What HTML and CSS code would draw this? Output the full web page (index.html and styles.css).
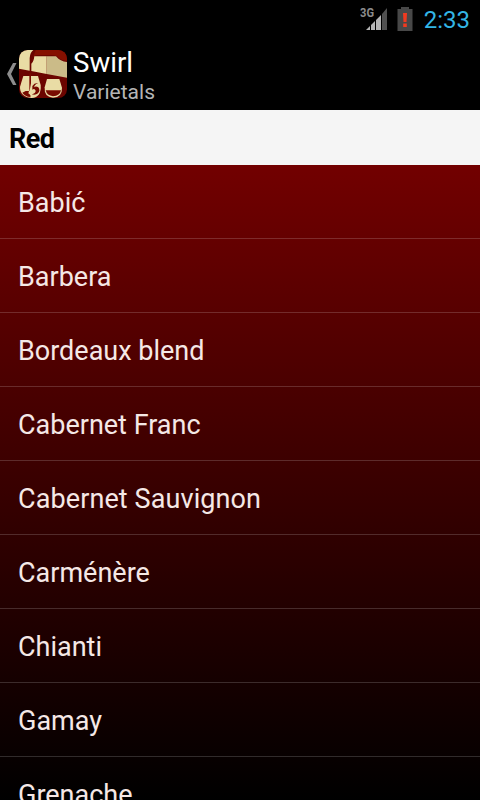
FILE: index.html
```
<!DOCTYPE html>
<html lang="en">
<head>
<meta charset="utf-8">
<title>Swirl</title>
<link rel="stylesheet" href="styles.css">
</head>
<body>
<div class="status">
  <svg class="signal" width="28" height="26" viewBox="0 0 28 26">
    <text class="network" x="0" y="12" textLength="14" lengthAdjust="spacingAndGlyphs">3G</text>
    <path fill="#b5b5b5" d="M6 25L10 21V25ZM11 20L15 16V25H11ZM16 15L21 10V25H16Z"/>
    <path fill="#505050" d="M22 9L27 3V25H22Z"/>
  </svg>
  <svg class="battery" width="16" height="24" viewBox="0 0 16 24">
    <path fill="#484848" d="M4 0H12V2H15.500V24H.500V2H4Z"/>
    <path fill="#f03a20" d="M6 6H10L9.500 15H6.500ZM6.200 16.500H9.800V20H6.200Z"/>
  </svg>
  <span class="clock">2:33</span>
</div>
<header class="bar">
  <svg class="back" width="11" height="22" viewBox="0 0 11 22"><path fill="#8c8c8c" d="M6 0H9.500L4 11L9.500 22H6L0 11Z"/></svg>
  <svg class="logo" width="48" height="48" viewBox="0 0 144 144">
    <defs><clipPath id="round"><rect width="144" height="144" rx="26"/></clipPath></defs>
    <g clip-path="url(#round)">
      <rect width="144" height="144" fill="#6b0500"/>
      <path fill="#e9dca5" d="M0 0H43Q33 8 32 24V62L0 56Z"/>
      <path fill="#851000" d="M50 0H144V32Q126 32 116 20Q112 15 98 15H56Q45 15 42 24Z"/>
      <path fill="#e9dca5" d="M46 19H83V72L37 63V41Q44 36 46 19Z"/>
      <path fill="#cbbb88" d="M83 19H111Q124 35 144 36V83L83 72Z"/>
      <path fill="#e9dca5" d="M13 78H57L65 105Q68 142 38 144Q2 140 3 110Z"/>
      <path fill="#780b00" d="M31 70H36V100L32 122Q26 124 20 123L10 128Q18 140 34 141Q37 136 28 130L31 120Z"/>
      <path fill="#780b00" d="M40 108Q46 98 57 99Q45 104 46 112Q50 107 58 112Q65 122 57 130Q50 136 38 133Q50 130 50 122Q47 114 40 119Z"/>
      <path fill="#e9dca5" d="M84 87H121L129 113Q130 142 102 143Q75 142 77 112Z"/>
      <path fill="#780b00" d="M80 121H126Q123 138 102 139Q84 137 80 121Z"/>
    </g>
  </svg>
  <div class="titles">
    <h1 class="title"><svg width="62" height="32"><text x="0" y="25" textLength="60" lengthAdjust="spacingAndGlyphs">Swirl</text></svg></h1>
    <div class="subtitle"><svg width="86" height="26"><text x="0" y="20" textLength="82" lengthAdjust="spacingAndGlyphs">Varietals</text></svg></div>
  </div>
</header>
<h2 class="section">Red</h2>
<ul class="list">
  <li>Babić</li>
  <li>Barbera</li>
  <li>Bordeaux blend</li>
  <li>Cabernet Franc</li>
  <li class="wide">Cabernet Sauvignon</li>
  <li>Carménère</li>
  <li>Chianti</li>
  <li>Gamay</li>
  <li>Grenache</li>
</ul>
</body>
</html>
```
FILE: styles.css
```
* { box-sizing: border-box; }
body {
  margin: 0;
  height: 800px;
  overflow: hidden;
  display: flex;
  flex-direction: column;
  background: #000;
  font-family: Roboto, sans-serif;
}
.status {
  height: 38px;
  flex: none;
  display: flex;
  justify-content: flex-end;
  align-items: flex-start;
  padding: 5px 10px 0 0;
}
.signal { margin-right: 9px; }
.network { font-size: 12px; font-weight: 700; fill: #8c8c8c; }
.battery { margin: 2px 11px 0 0; }
.clock { font-size: 24px; line-height: 30px; color: #33b5e5; }
.bar {
  height: 72px;
  flex: none;
  display: flex;
  align-items: center;
  padding-left: 7px;
}
.logo { margin-left: 1px; }
.titles { padding: 4px 0 0 6px; }
.titles svg { display: block; overflow: visible; }
.title { margin: 0; font-size: 27px; font-weight: 400; fill: #fff; }
.subtitle { font-size: 21px; fill: #b5b5b5; }
.section {
  margin: 0;
  height: 55px;
  flex: none;
  padding-left: 9px;
  background: #f5f5f5;
  color: #000;
  font-size: 27px;
  font-weight: 700;
  line-height: 59px;
  letter-spacing: -.6px;
}
.list {
  margin: 0;
  padding: 0;
  height: 635px;
  overflow: hidden;
  list-style: none;
  background: linear-gradient(#720000, #000);
}
.list li {
  height: 74px;
  padding-left: 18px;
  border-bottom: 1px solid rgba(255, 255, 255, .17);
  color: #f5e8e6;
  font-size: 27px;
  line-height: 77px;
}
.list .wide { letter-spacing: .1px; }
```
